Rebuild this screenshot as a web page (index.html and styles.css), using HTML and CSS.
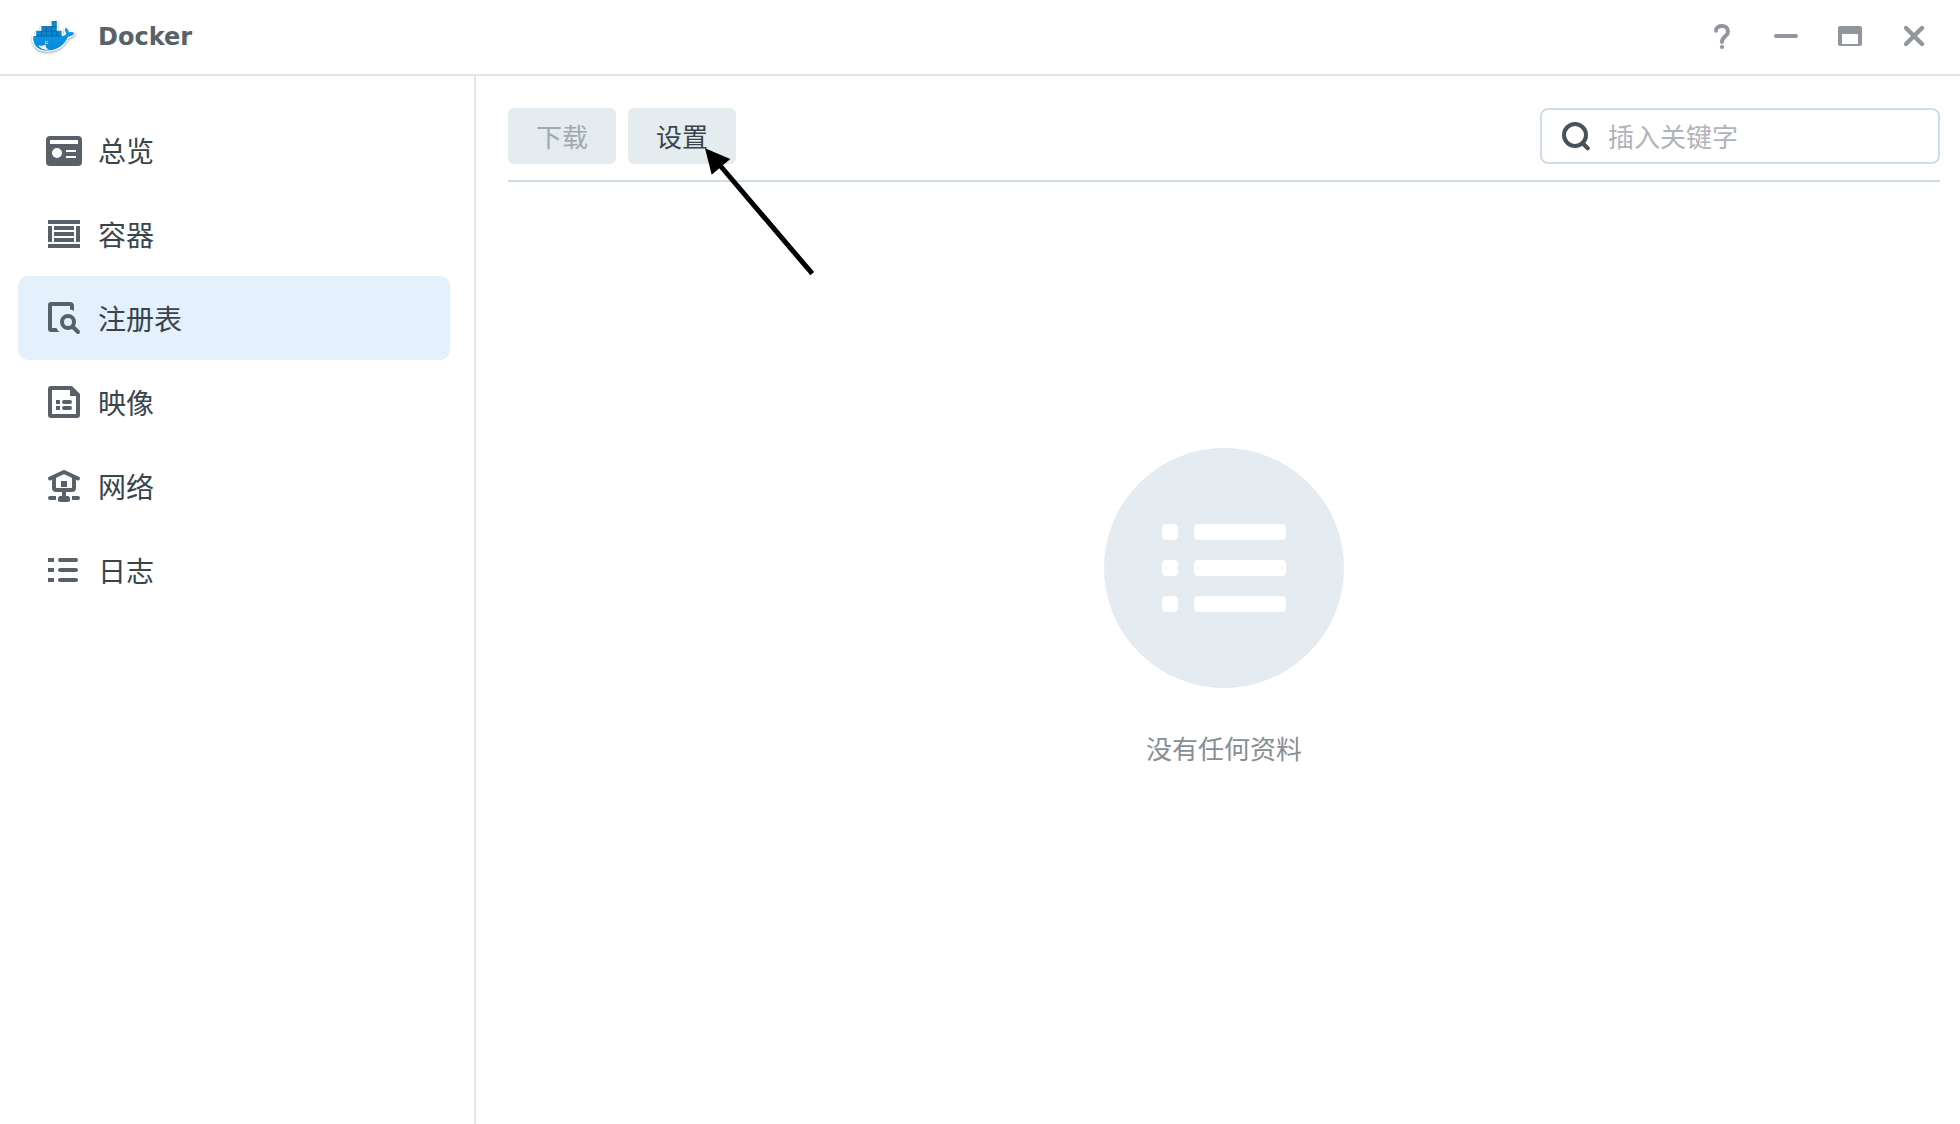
FILE: index.html
```html
<!DOCTYPE html>
<html lang="zh-CN">
<head>
<meta charset="utf-8">
<title>Docker</title>
<link rel="stylesheet" href="styles.css">
</head>
<body>
<div class="window">
  <header class="titlebar">
    <svg class="logo" viewBox="0 0 48 40" width="48" height="40" aria-hidden="true">
      <defs>
        <linearGradient id="whale" x1="0" y1="0" x2="0" y2="1"><stop offset="0" stop-color="#1298e8"/><stop offset="1" stop-color="#078adb"/></linearGradient>
        <path id="body" d="M3.2 19H31C33.6 19 35.6 18 36.4 16.4C34.6 14.6 34.4 12.4 35.9 10.8C37.6 11.8 38.6 13.4 38.9 15.4C40.8 14.8 42.8 15 44.4 16C43.2 18.3 41 19.5 38.2 19.7C34.6 27.4 28 33.4 16.6 33.4C7.8 33.4 2.6 28.4 3.2 19Z"/>
        <path id="cargo" d="M6.2 14.2H11.4V9.3H21.6V4.3H26.8V14.2H31.6V19.2H6.2Z"/>
      </defs>
      <g class="logo-shadow"><use href="#body"/><use href="#cargo"/></g>
      <g class="logo-outline"><use href="#body"/><use href="#cargo"/></g>
      <use href="#body" fill="url(#whale)"/>
      <use href="#cargo" fill="#0c86cc"/>
      <path d="M6.2 14.2H31.6M11.4 9.6H26.8M11.4 14V19M16.5 9.3V19M21.6 9.3V19M26.8 14V19M21.6 4.7H26.8M6.2 19H31.6" fill="none" stroke="#075f97" stroke-width=".7"/>
      <path d="M8 28.2C11 29.2 13.2 28.6 15.6 27.4C15.4 29.6 16.6 31.6 19.2 32.6C14.4 33.2 10.6 31.8 8 28.2Z" fill="#f1f5f7"/>
      <circle cx="16.6" cy="25.4" r="1.6" fill="#d8edf8"/><circle cx="16.8" cy="25.4" r=".8" fill="#16415f"/>
    </svg>
    <h1 class="title">Docker</h1>
    <div class="controls">
      <svg viewBox="0 0 24 28" width="24" height="28"><path d="M6 8.8C6 5.4 8.8 4 12 4C15.6 4 18 6.2 18 9.4C18 14.4 12 14.4 12 20" transform="translate(0 -1)" fill="none" stroke="#91969e" stroke-width="4" stroke-linecap="round" stroke-linejoin="round"/><circle cx="12" cy="24" r="2.1" fill="#91969e"/></svg>
      <svg viewBox="0 0 24 28" width="24" height="28"><rect y="11" width="24" height="4" rx="2" fill="#91969e"/></svg>
      <svg viewBox="0 0 24 28" width="24" height="28"><path fill="#91969e" fill-rule="evenodd" d="M2 3H22Q24 3 24 5V21Q24 23 22 23H2Q0 23 0 21V5Q0 3 2 3ZM4 11V21H20V11Z"/></svg>
      <svg viewBox="0 0 24 28" width="24" height="28"><path d="M4 5L20 21M20 5L4 21" stroke="#91969e" stroke-width="4.4" stroke-linecap="round"/></svg>
    </div>
  </header>
  <div class="content">
    <nav class="sidebar">
      <a class="item"><svg class="icon" viewBox="0 -1 36 36"><path fill-rule="evenodd" d="M4 3H32Q36 3 36 7V29Q36 33 32 33H4Q0 33 0 29V7Q0 3 4 3ZM4 7V11H32V7ZM11 15A5 5 0 1 0 11 25A5 5 0 1 0 11 15ZM20 17V19H30V17ZM20 23V25H30V23Z"/></svg>总览</a>
      <a class="item"><svg class="icon" viewBox="0 -1 36 36"><path d="M2 3H34V7H2ZM2 9H6V25H2ZM30 9H34V25H30ZM8 9H28V13H8ZM8 15H28V19H8ZM8 21H28V25H8ZM2 27H34V31H2Z"/></svg>容器</a>
      <a class="item active"><svg class="icon" viewBox="0 0 36 36"><path d="M28 11V6Q28 2 24 2H5Q2 2 2 5V29Q2 32 5 32H14Q11.5 31 10.5 28H6V6H24V9.4Q26.5 9.5 28 11Z"/><circle cx="22" cy="22" r="6" fill="none" stroke="#58616a" stroke-width="4"/><path d="M26.5 26.5L32 32" stroke="#58616a" stroke-width="4" stroke-linecap="round"/></svg>注册表</a>
      <a class="item"><svg class="icon" viewBox="0 0 36 36"><path fill-rule="evenodd" d="M5 2H26L34 10V31Q34 34 31 34H5Q2 34 2 31V5Q2 2 5 2ZM6 6V30H30V12H24V6Z"/><path d="M10 16H14V20H10ZM10 22H14V26H10Z"/><rect x="16" y="16" width="10" height="4" rx="2"/><rect x="16" y="22" width="10" height="4" rx="2"/></svg>映像</a>
      <a class="item"><svg class="icon" viewBox="0 0 36 36"><path d="M4 10.5L18 4L32 10.5M8 10V20Q8 22 10 22H26Q28 22 28 20V10M18 23V28" fill="none" stroke="#58616a" stroke-width="4" stroke-linecap="round" stroke-linejoin="round"/><path d="M15 13H21V19H15Z"/><rect x="12" y="28" width="12" height="6" rx="2.5"/><path d="M4 28H10V32H4Q2 32 2 30Q2 28 4 28ZM26 28H32Q34 28 34 30Q34 32 32 32H26Z"/></svg>网络</a>
      <a class="item"><svg class="icon" viewBox="0 0 36 36"><path d="M2 6H8V10H2ZM2 16H8V20H2ZM2 26H8V30H2Z"/><rect x="12" y="6" width="20" height="4" rx="2"/><rect x="12" y="16" width="20" height="4" rx="2"/><rect x="12" y="26" width="20" height="4" rx="2"/></svg>日志</a>
    </nav>
    <main class="main">
      <div class="toolbar">
        <button class="btn" disabled>下载</button>
        <button class="btn">设置</button>
        <label class="search">
          <svg viewBox="0 0 30 32" width="30" height="32"><circle cx="15" cy="15" r="11" fill="none" stroke="#47525b" stroke-width="4"/><path d="M22.5 23L27.7 28.3" stroke="#47525b" stroke-width="4.2" stroke-linecap="round"/></svg>
          <input class="field" type="text" placeholder="插入关键字">
        </label>
      </div>
      <section class="empty">
        <svg viewBox="0 0 240 240" width="240" height="240"><circle cx="120" cy="120" r="120" fill="#e4ebf1"/><g fill="#fff"><rect x="58" y="76" width="16" height="16" rx="4"/><rect x="90" y="76" width="92" height="16" rx="4"/><rect x="58" y="112" width="16" height="16" rx="4"/><rect x="90" y="112" width="92" height="16" rx="4"/><rect x="58" y="148" width="16" height="16" rx="4"/><rect x="90" y="148" width="92" height="16" rx="4"/></g></svg>
        <p class="empty-text">没有任何资料</p>
      </section>
    </main>
  </div>
  <svg class="pointer" viewBox="0 0 116 138" width="116" height="138" aria-hidden="true"><path d="M19.5 25L111.3 132.7" stroke="#000" stroke-width="5"/><path d="M4 7.3L29.3 18L10.7 33.7Z"/></svg>
</div>
</body>
</html>
```
FILE: styles.css
```css
* { box-sizing: border-box; }
body {
  margin: 0;
  font-family: "Noto Sans CJK SC", sans-serif;
  color: #39444d;
  background: #fff;
}
.window {
  position: relative;
  display: flex;
  flex-direction: column;
  height: 1124px;
  overflow: hidden;
}
.titlebar {
  display: flex;
  align-items: center;
  flex: none;
  height: 76px;
  padding: 0 34px 0 30px;
  border-bottom: 2px solid #dee7ef;
}
.logo { margin-right: 20px; overflow: visible; }
.logo-shadow {
  fill: #a5abb0;
  stroke: #a5abb0;
  stroke-width: 2.5;
  transform: translateY(1.3px);
  filter: blur(1px);
}
.logo-outline {
  fill: #fff;
  stroke: #fff;
  stroke-width: 2.6;
  stroke-linejoin: round;
}
.title {
  margin: 0;
  font: bold 24px/28px "DejaVu Sans", sans-serif;
  color: #58626b;
}
.controls { display: flex; gap: 40px; margin-left: auto; }
.content { display: flex; flex: 1; }
.sidebar {
  width: 476px;
  padding: 32px 24px 0 18px;
  border-right: 2px solid #dee7ef;
}
.item {
  display: flex;
  align-items: center;
  height: 84px;
  padding-left: 28px;
  gap: 16px;
  border-radius: 10px;
  font-size: 28px;
  line-height: 40px;
}
.active { background: #e4f0fc; }
.icon { width: 36px; height: 36px; fill: #58616a; }
.main {
  display: flex;
  flex-direction: column;
  flex: 1;
  padding: 32px 20px 0 32px;
}
.toolbar {
  display: flex;
  gap: 12px;
  padding-bottom: 16px;
  border-bottom: 2px solid #d1dde8;
}
.btn {
  width: 108px;
  height: 56px;
  padding: 0;
  border: 0;
  border-radius: 6px;
  background: #e4ecef;
  color: #39444d;
  font: 26px/38px "Noto Sans CJK SC", sans-serif;
}
.btn:disabled { color: #a1a9ac; }
.search {
  display: flex;
  align-items: center;
  gap: 18px;
  width: 400px;
  height: 56px;
  margin-left: auto;
  padding-left: 18px;
  border: 2px solid #d1dde8;
  border-radius: 8px;
}
.field {
  flex: 1;
  min-width: 0;
  padding: 0;
  border: 0;
  outline: 0;
  background: none;
  font: 26px/38px "Noto Sans CJK SC", sans-serif;
}
.field::placeholder { color: #b0b4ba; opacity: 1; }
.empty {
  display: flex;
  flex-direction: column;
  align-items: center;
  padding-top: 266px;
}
.empty-text {
  margin: 41px 0 0;
  font-size: 26px;
  line-height: 38px;
  color: #888e95;
}
.pointer { position: absolute; left: 701px; top: 141px; }
```
